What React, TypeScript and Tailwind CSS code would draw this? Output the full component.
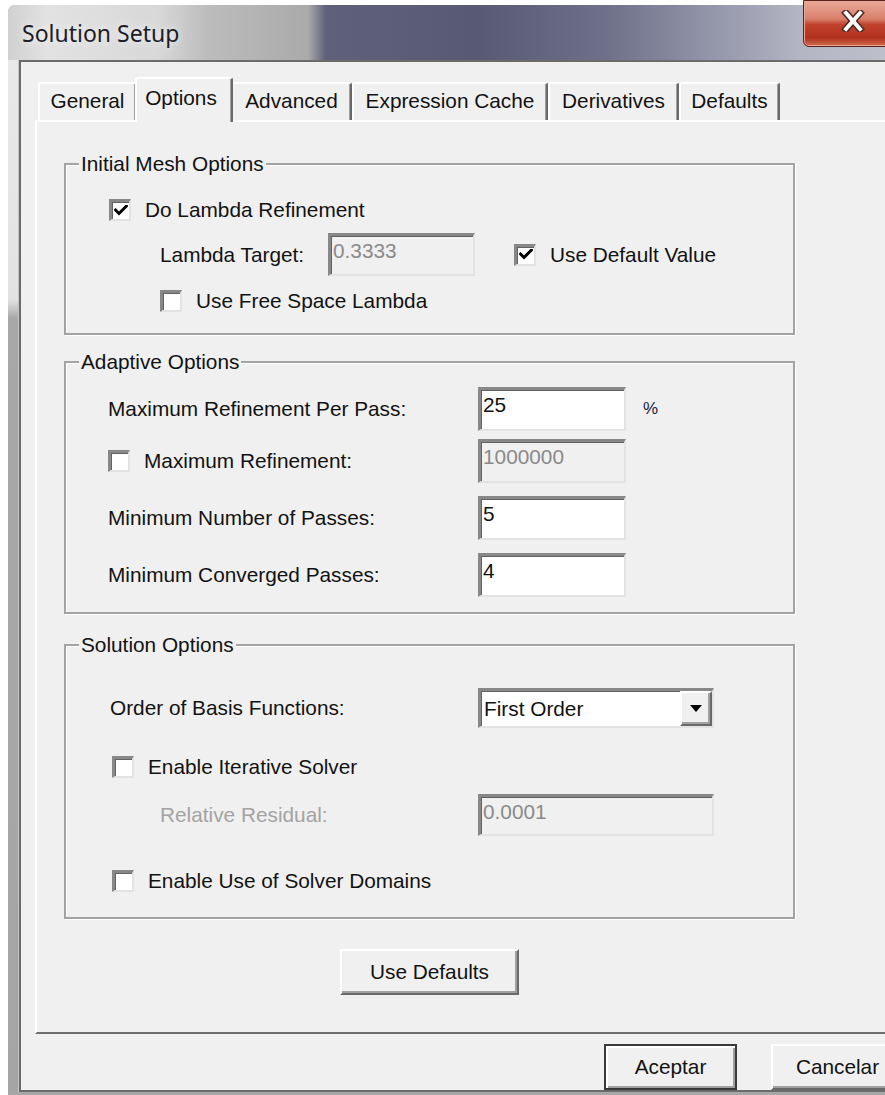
import React from "react";

type FieldProps = { value: string; size: string; disabled?: boolean };

// Sunken 3D edit box, classic Windows look
function Field({ value, size, disabled }: FieldProps) {
  return (
    <div
      className={`${size} shrink-0 overflow-hidden border-b-2 border-l-[3px] border-r-2 border-t-[3px] border-b-[#e3e3e3] border-l-[#888888] border-r-[#e3e3e3] border-t-[#888888] pl-[2px] pt-[3px] leading-[24px] shadow-[inset_1px_1px_0_#626262] ${
        disabled ? "bg-[#f0f0f0] text-[#8a8a8a]" : "bg-white text-[#111111]"
      }`}
    >
      {value}
    </div>
  );
}

function CheckBox({ checked = false }: { checked?: boolean }) {
  return (
    <span className="flex h-[22px] w-[22px] shrink-0 items-center justify-center border-b-2 border-l-[3px] border-r-2 border-t-[3px] border-b-[#e3e3e3] border-l-[#888888] border-r-[#e3e3e3] border-t-[#888888] bg-white shadow-[inset_1px_1px_0_#626262]">
      {checked && (
        <svg width="14" height="12" viewBox="0 0 14 12" aria-hidden="true">
          <path d="M1.5 5 L5 8.5 L12.5 1" fill="none" stroke="#000" strokeWidth="3" strokeLinecap="square" />
        </svg>
      )}
    </span>
  );
}

function Group({ title, size, children }: { title: string; size: string; children: React.ReactNode }) {
  return (
    <div className={`relative ml-[27px] w-[731px] ${size} shrink-0 border-2 border-[#a3a3a3] shadow-[inset_1px_1px_0_#ffffff,1px_1px_0_#ffffff]`}>
      <span className="absolute left-[13px] top-[-13px] bg-[#f0f0f0] px-[2px] leading-[24px]">{title}</span>
      {children}
    </div>
  );
}

type TabDef = { label: string; w: string; selected?: boolean };

const tabs: TabDef[] = [
  { label: "General", w: "w-[99px]" },
  { label: "Options", w: "w-[98px]", selected: true },
  { label: "Advanced", w: "w-[121px]" },
  { label: "Expression Cache", w: "w-[196px]" },
  { label: "Derivatives", w: "w-[131px]" },
  { label: "Defaults", w: "w-[101px]" },
];

function Tab({ label, w, selected }: TabDef) {
  if (selected) {
    return (
      <div
        className={`relative z-10 -mx-[2px] -mb-[2px] h-[45px] ${w} shrink-0 rounded-t-[3px] border-l-2 border-r-2 border-t-2 border-l-white border-r-[#696969] border-t-white bg-[#f0f0f0] pr-[6px] pt-[7px] text-center shadow-[inset_-1px_0_0_#a0a0a0]`}
      >
        {label}
      </div>
    );
  }
  return (
    <div
      className={`h-[38px] ${w} shrink-0 rounded-t-[3px] border-l-2 border-r-2 border-t-2 border-l-white border-r-[#696969] border-t-white bg-[#f0f0f0] pt-[5px] text-center shadow-[inset_-1px_0_0_#a0a0a0]`}
    >
      {label}
    </div>
  );
}

const raised =
  "flex items-center justify-center border-2 border-b-[#696969] border-l-white border-r-[#696969] border-t-white bg-[#f0f0f0] shadow-[inset_-2px_-2px_0_#a0a0a0]";

export default function App() {
  return (
    <div className="h-[1095px] w-[885px] overflow-hidden bg-white font-['Liberation_Sans',Arial,sans-serif] text-[20.8px] leading-[24px] text-[#121212]">
      <div className="ml-[8px] mt-[5px] flex h-[1090px] w-[920px] flex-col rounded-tl-[7px] bg-[#a7a7a7]">
        {/* title bar */}
        <div className="relative flex h-[55px] shrink-0 items-center rounded-tl-[7px] bg-[linear-gradient(90deg,#d0d0d0_0px,#e2e2e2_40px,#d8d8d8_150px,#bcbcbc_200px,#aaaaaa_300px,#5f6079_318px,#585a74_470px,#6e7189_600px,#999bae_720px,#b3b5c3_790px,#c3c4ce_920px)] pl-[14px]">
          <span className="font-['Noto_Sans',sans-serif] text-[23px] text-[#1c1c28] [text-shadow:0_0_8px_#ffffff]">
            Solution Setup
          </span>
          <div className="absolute left-[795px] top-[-5px] flex h-[47px] w-[100px] items-center justify-center rounded-bl-[6px] border border-[#5a2218] bg-[linear-gradient(180deg,#eaa898_0%,#d8806c_40%,#c2432c_52%,#b2311e_82%,#cf6b4c_100%)] pb-[6px] shadow-[inset_0_0_0_1px_#e9a795]">
            <svg width="24" height="22" viewBox="0 0 24 22" aria-hidden="true">
              <path d="M5 3 L19 19 M19 3 L5 19" stroke="#4a2a26" strokeWidth="7" strokeLinecap="square" />
              <path d="M5 3 L19 19 M19 3 L5 19" stroke="#ffffff" strokeWidth="4" strokeLinecap="square" />
            </svg>
          </div>
        </div>

        <div className="flex h-[1032px] shrink-0">
          {/* glass frame, left side */}
          <div className="w-[11px] shrink-0 bg-[linear-gradient(180deg,#e9e9e9_0px,#e2e2e2_240px,#a8a8a8_258px,#a5a5a5_100%)] shadow-[inset_-1px_0_0_#c4c4c4]" />

          {/* client area */}
          <div className="flex flex-1 flex-col border-2 border-r-0 border-[#6b6b6b] bg-[#f0f0f0]">
            <div className="flex h-[58px] shrink-0 items-end pl-[17px]">
              {tabs.map((t) => (
                <Tab key={t.label} {...t} />
              ))}
            </div>

            <div className="ml-[14px] flex h-[914px] w-[900px] shrink-0 flex-col border-b-2 border-l-2 border-t-2 border-b-[#6d6d6d] border-l-white border-t-white">
              <div className="mt-[41px]">
                <Group title="Initial Mesh Options" size="h-[172px]">
                  <div className="ml-[43px] mt-[34px] flex h-[22px] items-center gap-[14px]">
                    <CheckBox checked />
                    <span>Do Lambda Refinement</span>
                  </div>
                  <div className="ml-[94px] mt-[12px] flex h-[43px] items-center">
                    <span className="w-[168px] shrink-0">Lambda Target:</span>
                    <Field value="0.3333" size="w-[147px] h-[43px]" disabled />
                    <div className="ml-[39px] flex items-center gap-[14px]">
                      <CheckBox checked />
                      <span>Use Default Value</span>
                    </div>
                  </div>
                  <div className="ml-[94px] mt-[13px] flex h-[23px] items-center gap-[14px]">
                    <CheckBox />
                    <span>Use Free Space Lambda</span>
                  </div>
                </Group>
              </div>

              <div className="mt-[26px]">
                <Group title="Adaptive Options" size="h-[253px]">
                  <div className="mt-[24px] flex h-[44px] items-center">
                    <span className="w-[412px] shrink-0 pl-[42px]">Maximum Refinement Per Pass:</span>
                    <Field value="25" size="w-[148px] h-[44px]" />
                    <span className="ml-[17px] text-[17px] text-[#1a1a40]">%</span>
                  </div>
                  <div className="mt-[8px] flex h-[44px] items-center">
                    <div className="flex w-[412px] shrink-0 items-center gap-[14px] pl-[42px]">
                      <CheckBox />
                      <span>Maximum Refinement:</span>
                    </div>
                    <Field value="1000000" size="w-[148px] h-[44px]" disabled />
                  </div>
                  <div className="mt-[13px] flex h-[44px] items-center">
                    <span className="w-[412px] shrink-0 pl-[42px]">Minimum Number of Passes:</span>
                    <Field value="5" size="w-[148px] h-[44px]" />
                  </div>
                  <div className="mt-[13px] flex h-[44px] items-center">
                    <span className="w-[412px] shrink-0 pl-[42px]">Minimum Converged Passes:</span>
                    <Field value="4" size="w-[148px] h-[44px]" />
                  </div>
                </Group>
              </div>

              <div className="mt-[30px]">
                <Group title="Solution Options" size="h-[275px]">
                  <div className="mt-[42px] flex h-[40px] items-center">
                    <span className="w-[412px] shrink-0 pl-[44px]">Order of Basis Functions:</span>
                    <div className="flex h-[40px] w-[236px] shrink-0 items-center border-b-2 border-l-[3px] border-r-2 border-t-[3px] border-b-[#e3e3e3] border-l-[#888888] border-r-[#e3e3e3] border-t-[#888888] bg-white shadow-[inset_1px_1px_0_#626262]">
                      <span className="flex-1 pl-[3px]">First Order</span>
                      <span className={`${raised} h-full w-[32px]`}>
                        <svg width="12" height="7" viewBox="0 0 12 7" aria-hidden="true">
                          <path d="M0 0 H12 L6 7 Z" fill="#000" />
                        </svg>
                      </span>
                    </div>
                  </div>
                  <div className="ml-[46px] mt-[28px] flex h-[22px] items-center gap-[14px]">
                    <CheckBox />
                    <span>Enable Iterative Solver</span>
                  </div>
                  <div className="mt-[16px] flex h-[42px] items-center">
                    <span className="w-[412px] shrink-0 pl-[94px] text-[#a3a3a3]">Relative Residual:</span>
                    <Field value="0.0001" size="w-[236px] h-[42px]" disabled />
                  </div>
                  <div className="ml-[46px] mt-[34px] flex h-[22px] items-center gap-[14px]">
                    <CheckBox />
                    <span>Enable Use of Solver Domains</span>
                  </div>
                </Group>
              </div>

              <div className="ml-[27px] mt-[30px] flex w-[731px] justify-center">
                <button type="button" className={`${raised} h-[46px] w-[179px]`}>
                  Use Defaults
                </button>
              </div>
            </div>

            <div className="mt-[10px] flex h-[46px] shrink-0 gap-[34px] pl-[583px]">
              <button
                type="button"
                className="flex h-[46px] w-[133px] items-center justify-center border-2 border-[#3a3a3a] bg-[#f0f0f0] shadow-[inset_2px_2px_0_#ffffff,inset_-2px_-2px_0_#a0a0a0]"
              >
                Aceptar
              </button>
              <button type="button" className={`${raised} h-[46px] w-[133px]`}>
                Cancelar
              </button>
            </div>
          </div>
        </div>
      </div>
    </div>
  );
}
